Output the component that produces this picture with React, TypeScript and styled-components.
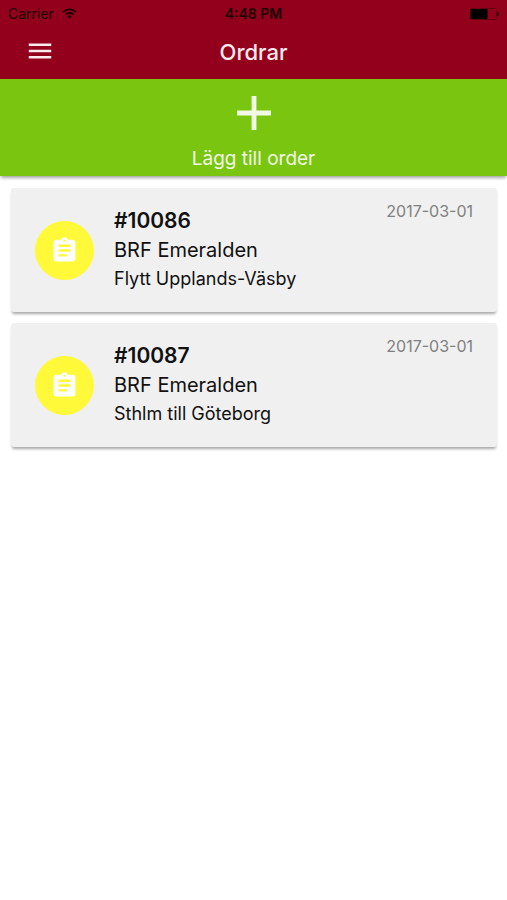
import React from "react";
import styled, { createGlobalStyle } from "styled-components";
import { MdAdd, MdAssignment, MdMenu } from "react-icons/md";

const GlobalStyle = createGlobalStyle`
  *, *::before, *::after { box-sizing: border-box; }
  body {
    margin: 0;
    background: #ffffff;
    color: #111111;
    font-family: Inter, "Liberation Sans", sans-serif;
  }
`;

const Header = styled.header`
  background: #93001b;
`;

const StatusBar = styled.div`
  display: grid;
  grid-template-columns: 1fr auto 1fr;
  align-items: center;
  height: 27px;
  padding: 0 8px;
  color: #1c0005;
  font-size: 14px;
  line-height: 16px;
`;

const Carrier = styled.span`
  display: flex;
  align-items: center;
  gap: 8px;
`;

const Clock = styled.time`
  font-weight: 600;
`;

const Battery = styled.svg`
  justify-self: end;
`;

const NavBar = styled.div`
  display: grid;
  grid-template-columns: 1fr auto 1fr;
  align-items: center;
  height: 52px;
  padding: 0 25px 4px;
`;

const MenuButton = styled.button`
  display: flex;
  justify-self: start;
  padding: 0;
  border: 0;
  background: none;
  color: #fbeaee;
  font-size: 30px;
  cursor: pointer;
`;

const Title = styled.h1`
  margin: 0;
  padding-top: 2px;
  color: #fbeaee;
  font-size: 22px;
  font-weight: 500;
  line-height: 28px;
`;

const AddButton = styled.button`
  display: flex;
  flex-direction: column;
  align-items: center;
  width: 100%;
  padding: 5px 0 0;
  border: 0;
  background: #7ac50f;
  box-shadow: 0 3px 3px -1px rgba(0, 0, 0, 0.35);
  color: #f1f9e6;
  font-family: inherit;
  font-size: 19px;
  line-height: 34px;
  cursor: pointer;
`;

const OrderList = styled.ul`
  display: flex;
  flex-direction: column;
  gap: 11px;
  margin: 0;
  padding: 12px 10px 12px 11px;
  list-style: none;
`;

const OrderCard = styled.li`
  display: flex;
  align-items: flex-start;
  padding: 18px 24px;
  border-radius: 3px;
  background: #f0f0f0;
  box-shadow: 0 3px 3px -1px rgba(0, 0, 0, 0.35);
`;

const Badge = styled.span`
  display: flex;
  flex: none;
  align-self: center;
  align-items: center;
  justify-content: center;
  width: 59px;
  height: 59px;
  margin-right: 20px;
  border-radius: 50%;
  background: #fff93a;
  color: #ffffff;
  font-size: 29px;
`;

const Details = styled.div`
  flex: 1;
  min-width: 0;
`;

const OrderNumber = styled.h2`
  margin: 0;
  font-size: 21px;
  font-weight: 600;
  line-height: 30px;
`;

const Customer = styled.p`
  margin: 0;
  font-size: 20px;
  line-height: 28px;
`;

const Description = styled.p`
  margin: 0;
  font-size: 18px;
  line-height: 30px;
`;

const OrderDate = styled.time`
  flex: none;
  color: #808080;
  font-size: 16px;
  line-height: 10px;
`;

const orders = [
  { id: "10086", customer: "BRF Emeralden", description: "Flytt Upplands-Väsby", date: "2017-03-01" },
  { id: "10087", customer: "BRF Emeralden", description: "Sthlm till Göteborg", date: "2017-03-01" },
];

export default function App() {
  return (
    <>
      <GlobalStyle />
      <Header>
        <StatusBar>
          <Carrier>
            Carrier
            <svg width="15" height="11" viewBox="0 0 16 12" fill="none" stroke="currentColor" strokeWidth="2" aria-hidden="true">
              <path d="M1 4.4a10 10 0 0 1 14 0" />
              <path d="M3.7 7.2a6.1 6.1 0 0 1 8.6 0" />
              <path d="M8 11.6 5.7 9.2a3.3 3.3 0 0 1 4.6 0Z" fill="currentColor" stroke="none" />
            </svg>
          </Carrier>
          <Clock>4:48 PM</Clock>
          <Battery width="29" height="12" viewBox="0 0 29 12" aria-label="Battery">
            <rect x="0.5" y="0.5" width="26" height="11" rx="1.5" fill="none" stroke="#65000f" />
            <rect x="0.5" y="1" width="17" height="10" rx="1" fill="#000000" />
            <path d="M27.4 4a2 2 0 0 1 0 4Z" fill="#1c0005" />
          </Battery>
        </StatusBar>
        <NavBar>
          <MenuButton type="button" aria-label="Meny">
            <MdMenu />
          </MenuButton>
          <Title>Ordrar</Title>
        </NavBar>
      </Header>
      <main>
        <AddButton type="button">
          <MdAdd size={58} />
          Lägg till order
        </AddButton>
        <OrderList>
          {orders.map((order) => (
            <OrderCard key={order.id}>
              <Badge>
                <MdAssignment />
              </Badge>
              <Details>
                <OrderNumber>#{order.id}</OrderNumber>
                <Customer>{order.customer}</Customer>
                <Description>{order.description}</Description>
              </Details>
              <OrderDate dateTime={order.date}>{order.date}</OrderDate>
            </OrderCard>
          ))}
        </OrderList>
      </main>
    </>
  );
}
